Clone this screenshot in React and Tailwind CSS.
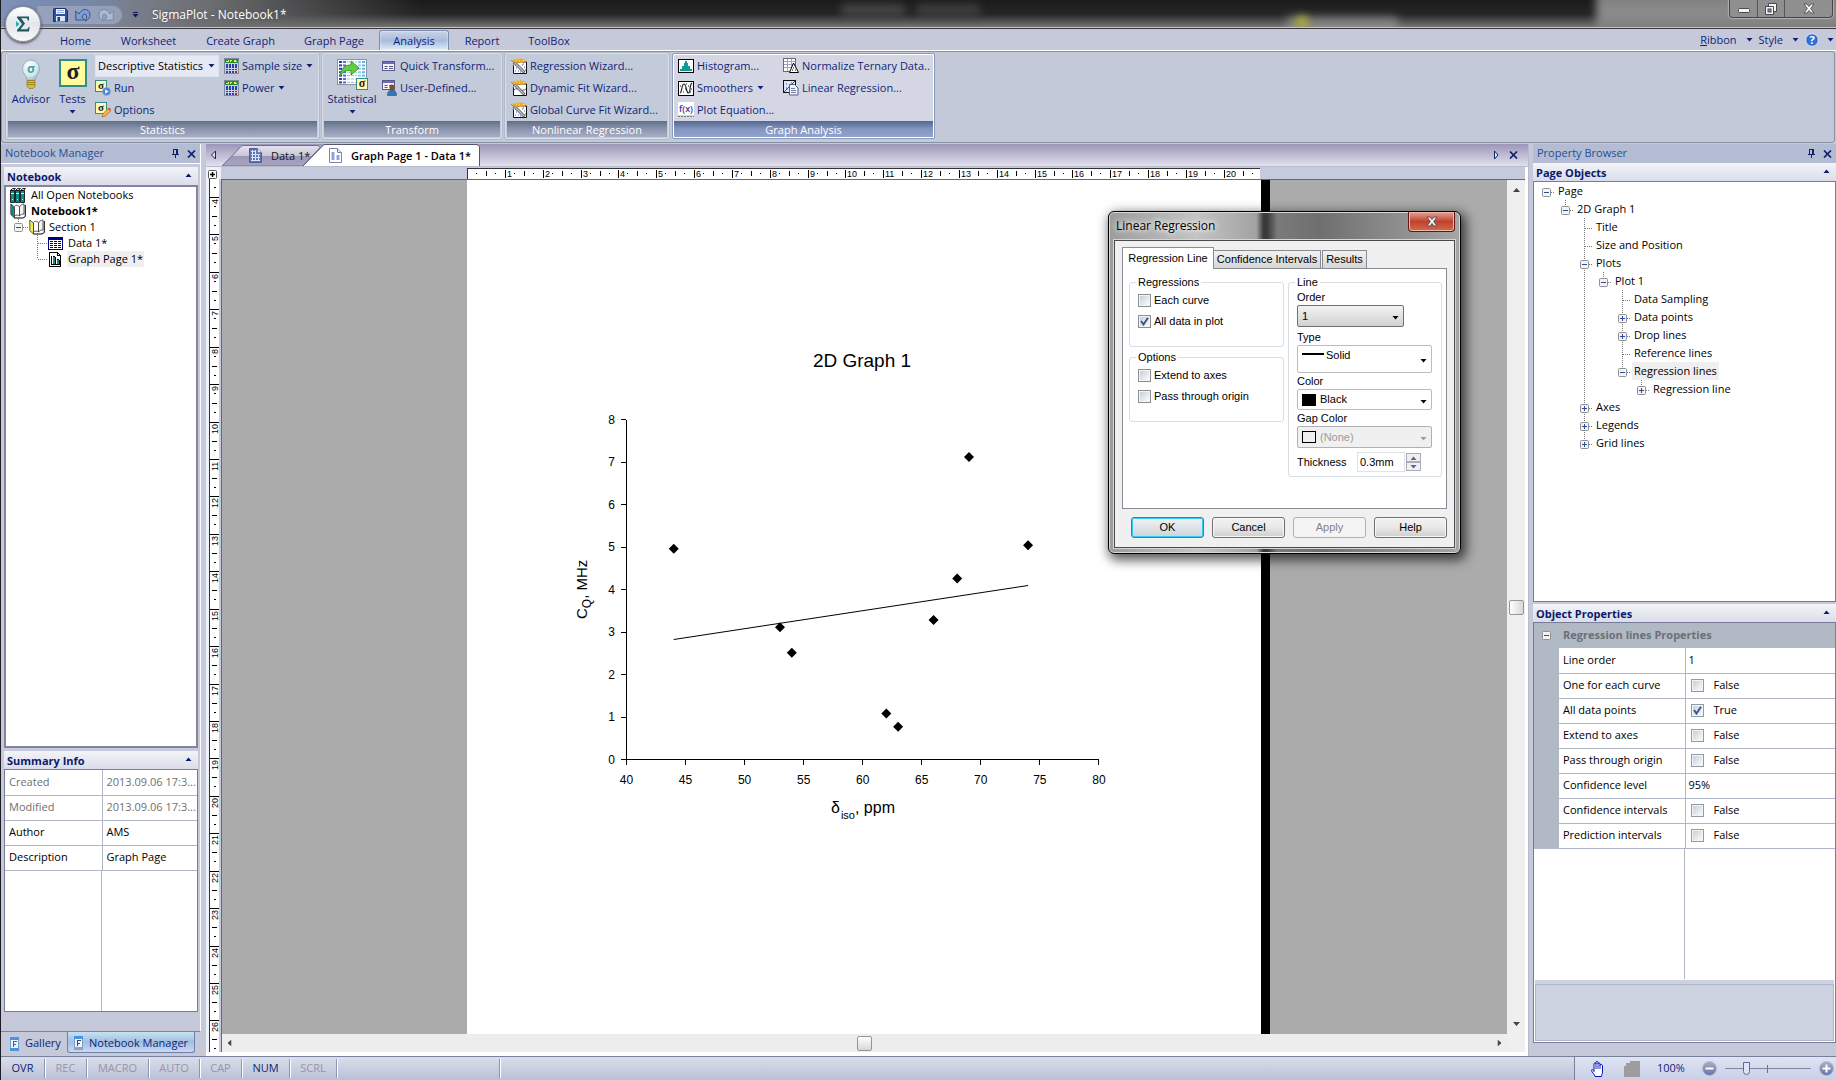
import clsx from 'clsx';

const UI = "font-['Open_Sans',sans-serif]";
const DIALOG = "font-['Liberation_Sans',sans-serif]";

const RIBBON_TABS = [
    { label: 'Home', width: 'w-[59px]' },
    { label: 'Worksheet', width: 'w-[87px]' },
    { label: 'Create Graph', width: 'w-[97px]' },
    { label: 'Graph Page', width: 'w-[90px]' },
    { label: 'Analysis', width: 'w-[70px]', active: true },
    { label: 'Report', width: 'w-[66px]' },
    { label: 'ToolBox', width: 'w-[68px]' },
];

const PAGE_TREE = [
    { label: 'Page', level: 0, box: '-', bars: [] },
    { label: '2D Graph 1', level: 1, box: '-', bars: [] },
    { label: 'Title', level: 2, more: true, bars: [] },
    { label: 'Size and Position', level: 2, more: true, bars: [] },
    { label: 'Plots', level: 2, box: '-', more: true, bars: [] },
    { label: 'Plot 1', level: 3, box: '-', bars: [2] },
    { label: 'Data Sampling', level: 4, more: true, bars: [2] },
    { label: 'Data points', level: 4, box: '+', more: true, bars: [2] },
    { label: 'Drop lines', level: 4, box: '+', more: true, bars: [2] },
    { label: 'Reference lines', level: 4, more: true, bars: [2] },
    { label: 'Regression lines', level: 4, box: '-', bars: [2], selected: true },
    { label: 'Regression line', level: 5, box: '+', bars: [2] },
    { label: 'Axes', level: 2, box: '+', more: true, bars: [] },
    { label: 'Legends', level: 2, box: '+', more: true, bars: [] },
    { label: 'Grid lines', level: 2, box: '+', bars: [] },
];

const PROPERTIES = [
    { label: 'Line order', value: '1' },
    { label: 'One for each curve', checked: false },
    { label: 'All data points', checked: true },
    { label: 'Extend to axes', checked: false },
    { label: 'Pass through origin', checked: false },
    { label: 'Confidence level', value: '95%' },
    { label: 'Confidence intervals', checked: false },
    { label: 'Prediction intervals', checked: false },
];

const SUMMARY = [
    { label: 'Created', value: '2013.09.06 17:3...', muted: true },
    { label: 'Modified', value: '2013.09.06 17:3...', muted: true },
    { label: 'Author', value: 'AMS' },
    { label: 'Description', value: 'Graph Page' },
];

const STATUS = [
    { label: 'OVR', on: true, width: 'w-[44px]' },
    { label: 'REC', width: 'w-[42px]' },
    { label: 'MACRO', width: 'w-[62px]' },
    { label: 'AUTO', width: 'w-[51px]' },
    { label: 'CAP', width: 'w-[42px]' },
    { label: 'NUM', on: true, width: 'w-[48px]' },
    { label: 'SCRL', width: 'w-[47px]' },
];

const POINTS = [
    [44, 4.96], [53, 3.11], [54, 2.51], [62, 1.08], [63, 0.77], [66, 3.28], [68, 4.26], [69, 7.12], [74, 5.04],
];

const px = (v) => 626.5 + (v - 40) * 11.81;
const py = (v) => 759.5 - v * 42.5;

/* ---------- icons ---------- */

function Caret({ className }) {
    return (
        <svg width="7" height="4" viewBox="0 0 7 4" className={clsx('shrink-0', className)} aria-hidden="true">
            <path d="M0.5 0h6L3.5 3.6z" fill="currentColor" />
        </svg>
    );
}

function PinIcon() {
    return (
        <svg width="9" height="9" viewBox="0 0 9 9" shapeRendering="crispEdges" aria-hidden="true">
            <path d="M2 0h5v5H2zM3 1v4h2V1z" fill="#10206f" fillRule="evenodd" />
            <path d="M1 5h7v1H1zM4 6h1v3H4z" fill="#10206f" />
        </svg>
    );
}

function CrossIcon() {
    return (
        <svg width="9" height="8" viewBox="0 0 9 8" aria-hidden="true">
            <path d="M1 .5l7 7M8 .5l-7 7" stroke="#10206f" strokeWidth="1.7" />
        </svg>
    );
}

function SaveIcon() {
    return (
        <svg width="15" height="14" viewBox="0 0 15 14" aria-hidden="true">
            <path d="M.5 1.5a1 1 0 011-1h11l2 2v11h-14z" fill="#2c4fa6" stroke="#1c2f78" />
            <rect x="3" y="1" width="9" height="5" fill="#f2f5fb" />
            <path d="M4 2.5h7M4 4.5h7" stroke="#9aa8c8" />
            <rect x="3" y="8" width="9" height="5.5" fill="#dfe6f3" />
            <rect x="4.500" y="9" width="2.500" height="4" fill="#223a86" />
        </svg>
    );
}

function UndoIcon({ redo }) {
    return (
        <svg width="16" height="14" viewBox="0 0 16 14" className={redo ? '-scale-x-100' : ''} aria-hidden="true">
            <path
                d="M.8 3v9h9L7 9c.6-3 3.600-4 4.400-1.500.6 2-.2 3.800-1 5.500 3.600-1.500 5.200-4.600 4.300-8C13.500.6 7.500-.3 4 6z"
                fill={redo ? '#a9bcd6' : '#7d9fd3'}
                stroke={redo ? '#7386a8' : '#274a92'}
                strokeWidth=".9"
            />
        </svg>
    );
}

function BulbIcon() {
    return (
        <svg width="20" height="31" viewBox="0 0 20 31" aria-hidden="true">
            <defs>
                <radialGradient id="bulb" cx=".4" cy=".3" r=".8">
                    <stop offset="0" stopColor="#fff" />
                    <stop offset=".6" stopColor="#d4e6ea" />
                    <stop offset="1" stopColor="#86a9b5" />
                </radialGradient>
            </defs>
            <path d="M10 1a8.500 8.500 0 00-8.500 8.500c0 5 3.800 6.500 4.500 12h8c.7-5.500 4.500-7 4.500-12A8.500 8.500 0 0010 1z" fill="url(#bulb)" stroke="#8aa6b0" strokeWidth=".8" />
            <text x="10" y="14" textAnchor="middle" fontSize="12" fontWeight="700" fill="#3f9fae" className={UI}>σ</text>
            <path d="M6 21.500h8v6l-2 2H8l-2-2z" fill="#d3bb3f" stroke="#8c7618" strokeWidth=".7" />
            <path d="M6 23.500h8M6 25.500h8" stroke="#8c7618" strokeWidth=".7" />
        </svg>
    );
}

function SigmaTile() {
    return (
        <svg width="28" height="28" viewBox="0 0 28 28" className="overflow-visible" aria-hidden="true">
            <rect x="1" y="1" width="26" height="26" fill="#fffc9e" stroke="#2f8f86" strokeWidth="2" />
            <text x="14" y="20" textAnchor="middle" fontSize="24" fontWeight="700" fill="#222" className="font-['Liberation_Serif',serif]">σ</text>
        </svg>
    );
}

function RunIcon() {
    return (
        <svg width="16" height="16" viewBox="0 0 16 16" className="overflow-visible" aria-hidden="true">
            <rect x=".5" y=".5" width="11" height="11" fill="#fffcb8" stroke="#2f8f86" />
            <text x="6" y="9" textAnchor="middle" fontSize="11" fontWeight="700" fill="#222" className="font-['Liberation_Serif',serif]">σ</text>
            <circle cx="11.500" cy="11.500" r="4" fill="#4b80d0" stroke="#8fb2e6" strokeWidth=".6" />
            <path d="M10.200 9.200l3.500 2.300-3.500 2.300z" fill="#fff" />
        </svg>
    );
}

function OptionsIcon() {
    return (
        <svg width="16" height="16" viewBox="0 0 16 16" className="overflow-visible" aria-hidden="true">
            <rect x=".5" y=".5" width="11" height="11" fill="#fffcb8" stroke="#2f8f86" />
            <text x="6" y="9" textAnchor="middle" fontSize="11" fontWeight="700" fill="#222" className="font-['Liberation_Serif',serif]">σ</text>
            <path d="M7 15l1-3.500 5-5 2.500 2.500-5 5z" fill="#f2b544" stroke="#a8691a" strokeWidth=".7" />
            <path d="M13 6.500l1-1 2 2-.8 1.200z" fill="#d8423a" />
        </svg>
    );
}

function CalcIcon() {
    const cells = [];
    for (let y = 0; y < 4; y++) for (let x = 0; x < 4; x++) cells.push([x, y]);
    return (
        <svg width="15" height="16" viewBox="0 0 15 16" shapeRendering="crispEdges" aria-hidden="true">
            <rect width="15" height="16" fill="#7f8a9c" />
            <rect x="1" y="1" width="13" height="4" fill="#1d8f3a" />
            <path d="M2 3h2V2h1v2h1V2h2v1h1v1h1V2h2v1h1v1H9V3H7v1H2z" fill="#f6ee3c" />
            <rect x="1" y="5" width="13" height="10" fill="#c9d0e2" />
            {cells.map(([x, y]) => (
                <rect key={`${x}-${y}`} x={2 + x * 3} y={6 + y * 2.4} width="2" height="1.600" fill={x === 3 && y === 3 ? '#c81e1e' : '#2a3fb5'} />
            ))}
        </svg>
    );
}

function StatisticalIcon() {
    const rows = [0, 1, 2, 3, 4, 5, 6];
    return (
        <svg width="31" height="31" viewBox="0 0 31 31" aria-hidden="true">
            <rect x=".5" y=".5" width="29" height="25" fill="#fff" stroke="#8b93a6" />
            {rows.map((r) => (
                <g key={r}>
                    <rect x="2" y={2 + r * 3.4} width="3" height="2" fill="#2f35c8" />
                    <rect x="6" y={2 + r * 3.4} width="3" height="2" fill="#5c6ad8" />
                    <path d={`M10 ${3 + r * 3.4}h10`} stroke="#a9b6dc" strokeDasharray="3 1" />
                    <rect x="21" y={2 + r * 3.4} width="3" height="2" fill="#8fd0f2" />
                    <rect x="25" y={2 + r * 3.4} width="3" height="2" fill="#62b5e6" />
                </g>
            ))}
            <path d="M3 17C4 9 8 6 14 6V2l8 7-8 7v-4.500C9 11 6 12.500 3 17z" fill="#5fce3f" stroke="#2f8f24" strokeWidth=".9" />
            <rect x="19.500" y="19.500" width="11" height="11" fill="#fffcb8" stroke="#2f8f86" />
            <text x="25" y="28" textAnchor="middle" fontSize="12" fontWeight="700" fill="#222" className="font-['Liberation_Serif',serif]">σ</text>
        </svg>
    );
}

function FormIcon({ user }) {
    return (
        <svg width="15" height="16" viewBox="0 0 15 16" aria-hidden="true">
            <rect x=".5" y={user ? 0.5 : 3.5} width="12" height="9" fill="#f4f4fa" stroke="#59598c" />
            <rect x="1" y={user ? 1 : 4} width="11" height="2" fill="#6a68c0" />
            <path d={user ? 'M2.500 5.500h3M7 5.500h4M2.500 7.500h3' : 'M2.500 8.500h3M7 8.500h4M2.500 10.500h3M7 10.500h4'} stroke="#55557a" />
            {user && (
                <>
                    <circle cx="10" cy="7" r="2.600" fill="#8a4b2a" />
                    <path d="M5.500 15.500c0-4 2-5.500 4.500-5.500s4.500 1.500 4.500 5.500z" fill="#3477b4" stroke="#1f4f80" strokeWidth=".6" />
                </>
            )}
        </svg>
    );
}

function WizardIcon({ curve }) {
    return (
        <svg width="16" height="16" viewBox="0 0 16 16" aria-hidden="true">
            <path d="M2.500 4v11.500h13V4z" fill="#fff" stroke="#111" />
            {curve === 'line' && <path d="M3 10c4-4 7 3 12-1" stroke="#3757d8" fill="none" />}
            {curve !== 'line' && <path d="M4 13h1M5 10h1M9 14h1M11 7h1M13 9h1M4 7h1M7 13h1M14 12h1M12 6h1" stroke="#3757d8" />}
            <path d="M4 5l9.500 9.500" stroke="#4c4c4c" strokeWidth="2.800" />
            <path d="M4 5l9 9" stroke="#c4c4c4" strokeWidth="1.400" />
            <path d="M2 1l2 1 2-2 1.500 1.800L10 0l1 1.500L14 1l-.5 2L15 4.500l-3-.3L10 5 8 4 6 5 4 4 1 4z" fill="#f4a915" />
            <path d="M5 2h1M8 3h1M12 2.500h1" stroke="#fff36b" />
            <path d="M0 2l3 3-1 3" stroke="#8a8a8a" fill="none" />
        </svg>
    );
}

function HistogramIcon() {
    return (
        <svg width="16" height="14" viewBox="0 0 16 14" shapeRendering="crispEdges" aria-hidden="true">
            <rect x=".5" y=".5" width="15" height="13" fill="#fff" stroke="#000" />
            <path d="M2 12v-2h2V7h2V4h1V2h2v2h1v3h2v3h2v2z" fill="#0e9a97" />
        </svg>
    );
}

function SmootherIcon() {
    return (
        <svg width="16" height="15" viewBox="0 0 16 15" aria-hidden="true">
            <rect x=".5" y=".5" width="15" height="14" fill="#fff" stroke="#000" />
            <path d="M2 12C4 12 3.500 3 6 3s2 9 4.500 9S11 4 14 2" stroke="#222" strokeWidth="1.200" fill="none" />
            <path d="M2 5h1M3 9h1M5 11h1M8 3h1M7 8h1M12 11h1M13 8h1M10 5h1" stroke="#222" />
        </svg>
    );
}

function EquationIcon() {
    return (
        <svg width="16" height="16" viewBox="0 0 16 16" aria-hidden="true">
            <rect width="16" height="13" fill="#fff" />
            <text x="8" y="10" textAnchor="middle" fontSize="9" fontWeight="600" fill="#3b35a0" className={UI}>f(x)</text>
            <path d="M0 14.500h16" stroke="#777" strokeDasharray="2 1" />
        </svg>
    );
}

function TernaryIcon() {
    return (
        <svg width="16" height="16" viewBox="0 0 16 16" aria-hidden="true">
            <rect x=".5" y=".5" width="12" height="13" fill="#fff" stroke="#666c80" />
            <path d="M1 3.500h11M1 6.500h11M1 9.500h11M4.500 1v12M8.500 1v12" stroke="#9aa1cc" />
            <path d="M6.500 14.500L10.500 5l5 9.500z" fill="#fff" stroke="#000" />
            <path d="M10 10h1M9 12h1M12 12h1" stroke="#000" />
        </svg>
    );
}

function LinearIcon() {
    return (
        <svg width="16" height="16" viewBox="0 0 16 16" aria-hidden="true">
            <rect x=".5" y=".5" width="12" height="12" fill="#dfe4f6" stroke="#111" />
            <path d="M1 12L12 1" stroke="#2d45c0" />
            <path d="M3 4h1M6 5h1M8 3h1M3 8h1" stroke="#2d45c0" />
            <path d="M6.500 4.500h5l3.500 3.500v7h-8.500z" fill="#f3f5fb" stroke="#555f80" />
            <path d="M8 8.500h4M8 10.500h5M8 12.500h5" stroke="#6f7fb0" />
        </svg>
    );
}

function HelpIcon() {
    return (
        <svg width="14" height="14" viewBox="0 0 14 14" aria-hidden="true">
            <circle cx="7" cy="7" r="6.300" fill="#2e6fd6" stroke="#dbe6f7" />
            <text x="7" y="11" textAnchor="middle" fontSize="11" fontWeight="700" fill="#fff" className={UI}>?</text>
        </svg>
    );
}

function SheetIcon({ chart }) {
    return (
        <svg width="13" height="15" viewBox="0 0 13 15" aria-hidden="true">
            <path d="M.5.5h8l4 4v10H.5z" fill={chart ? '#fff' : '#5f74b5'} stroke={chart ? '#7c84a5' : '#505f98'} />
            <path d="M8.500.5v4h4" fill="#e4e8f4" stroke="#7c84a5" />
            {chart ? (
                <path d="M4 12V4M9 12V7" stroke="#8fa3dc" strokeWidth="3" />
            ) : (
                <path d="M2 3.500h5M2 6.500h9M2 9.500h9M2 12.500h9M3.500 2v11M6.500 2v11M9.500 6v7" stroke="#dde4f6" />
            )}
        </svg>
    );
}

function BooksIcon() {
    return (
        <svg width="16" height="15" viewBox="0 0 16 15" aria-hidden="true">
            {[0, 5, 10].map((x) => (
                <g key={x}>
                    <path d={`M${x + 0.5} 2.500l2-2h3l-2 2z`} fill="#ccc" stroke="#000" strokeWidth=".8" />
                    <path d={`M${x + 0.5} 2.500h4v12h-4z`} fill="#128c84" stroke="#000" strokeWidth=".8" />
                    <path d={`M${x + 1} 5.500h3M${x + 2} 11.500h1`} stroke="#d7efec" />
                </g>
            ))}
        </svg>
    );
}

function OpenBookIcon({ color }) {
    return (
        <svg width="16" height="16" viewBox="0 0 16 16" aria-hidden="true">
            <path d="M.8 1L4.500 4v11L.8 11.500z" fill={color} stroke="#333" strokeWidth=".8" />
            <path d="M4.500 13V3.500C6 1.500 8.500 2 9.500 4v9c-1.500-1.500-3.500-1-5 0z" fill="#fff" stroke="#333" strokeWidth=".8" />
            <path d="M9.500 4c.8-2 3-3 4.500-3v10c-2 0-3.500.5-4.500 2z" fill="#f4f4f4" stroke="#333" strokeWidth=".8" />
            <path d="M4.500 15h8.500l2.300-1.500V2" stroke="#000" fill="none" />
        </svg>
    );
}

function TableIcon() {
    return (
        <svg width="15" height="13" viewBox="0 0 15 13" shapeRendering="crispEdges" aria-hidden="true">
            <rect x=".5" y=".5" width="14" height="12" fill="#fff" stroke="#00007d" />
            <rect x="1" y="1" width="13" height="2" fill="#00007d" />
            <path d="M2 4.500h11M2 6.500h11M2 8.500h11M2 10.500h11" stroke="#111" strokeDasharray="3 1" />
        </svg>
    );
}

function GraphPageIcon() {
    return (
        <svg width="14" height="15" viewBox="0 0 14 15" shapeRendering="crispEdges" aria-hidden="true">
            <path d="M1.500.5h8l3 3v11h-11z" fill="#fff" stroke="#000" />
            <path d="M9.500.5v3h3" fill="none" stroke="#000" />
            <path d="M3 4h1v8h8v1H3z" fill="#000" />
            <rect x="5" y="5" width="2" height="7" fill="#128c84" />
            <rect x="9" y="8" width="2" height="4" fill="#128c84" />
            <path d="M5 4.500h2M9 7.500h2M7.500 5v7M11.500 8v4" stroke="#000" />
        </svg>
    );
}

function DockIcon({ mark }) {
    return (
        <svg width="9" height="14" viewBox="0 0 9 14" shapeRendering="crispEdges" aria-hidden="true">
            <rect x=".5" y=".5" width="8" height="13" fill="#eef2fb" stroke="#6aa0dc" />
            <rect width="9" height="3" fill="#4f93dc" />
            <rect y="11" width="9" height="3" fill={mark ? '#9aa0ac' : '#4f93dc'} />
            <path d="M3 4.500h4M3 7.500h3M3.500 4v6" stroke={mark ? '#445' : '#3b5fd0'} />
        </svg>
    );
}

function HandIcon() {
    return (
        <svg width="13" height="16" viewBox="0 0 13 16" aria-hidden="true">
            <path
                d="M4 15.500c0-2-3.500-4.500-3.500-6s1.500-1 2.500 1V3c0-1.500 2-1.500 2 0V1.500c0-1.500 2-1.500 2 0V3c0-1.500 2-1.500 2 0v1.500c0-1.500 2-1.500 2.500 0V11c0 2-1 2.500-1 4.500z"
                fill="#fff"
                stroke="#0a12c4"
            />
            <path d="M5 3v5M7 3v5M9 4v4" stroke="#0a12c4" strokeWidth=".9" />
        </svg>
    );
}

function ZoomIcon({ plus }) {
    return (
        <svg width="15" height="15" viewBox="0 0 15 15" aria-hidden="true">
            <defs>
                <linearGradient id={plus ? 'zoom-in' : 'zoom-out'} x2="0" y2="1">
                    <stop offset="0" stopColor="#a9b0c2" />
                    <stop offset="1" stopColor="#6376ac" />
                </linearGradient>
            </defs>
            <circle cx="7.500" cy="7.500" r="7" fill={plus ? 'url(#zoom-in)' : 'url(#zoom-out)'} stroke="#b8bfd2" strokeWidth=".8" />
            <path d={plus ? 'M3.500 7.500h8M7.500 3.500v8' : 'M3.500 7.500h8'} stroke="#fff" strokeWidth="2" />
        </svg>
    );
}

function ExpandBox({ x, y, sign }) {
    return (
        <g>
            <rect x={x + 0.5} y={y + 0.5} width="8" height="8" rx="1" fill="#f3f3f3" stroke="#919191" />
            <path d={`M${x + 2} ${y + 4.5}h5`} stroke="#2b4b9c" />
            {sign === '+' && <path d={`M${x + 4.5} ${y + 2}v5`} stroke="#2b4b9c" />}
        </g>
    );
}

/* ---------- ribbon ---------- */

function RibbonItem({ icon, label, caret }) {
    return (
        <button type="button" className="flex h-[22px] items-center whitespace-nowrap text-left">
            <span className="grid w-[16px] shrink-0 place-items-center">{icon}</span>
            <span className="ml-[3px]">{label}</span>
            {caret && <Caret className="ml-[4px]" />}
        </button>
    );
}

function RibbonGroup({ title, className, hot, children }) {
    return (
        <section
            className={clsx(
                'flex h-[86px] shrink-0 flex-col rounded-[2px] border p-px',
                hot ? 'border-[#8d99b8] bg-[#d4d7e3] ring-1 ring-inset ring-white' : 'border-[#d9deea] bg-[#c3cad9] outline-1 outline-[#b1b8ca]',
                className,
            )}
        >
            <div className="flex min-h-0 flex-1">{children}</div>
            <h2
                className={clsx(
                    'h-4 shrink-0 bg-gradient-to-b text-center leading-[18px] text-white',
                    hot ? 'from-[#54678f] via-[#8495c0] to-[#92a3cd]' : 'from-[#626e86] via-[#8a94af] to-[#a6aec4]',
                )}
            >
                {title}
            </h2>
        </section>
    );
}

function CloseGlyph() {
    return (
        <svg width="12" height="11" viewBox="0 0 12 11" aria-hidden="true">
            <path d="M1 1h3l2 2.500L8 1h3L7.700 5.500 11 10H8L6 7.500 4 10H1l3.300-4.500z" fill="#f6f6f6" stroke="#4a4a58" strokeWidth=".9" />
        </svg>
    );
}

function TitleBar() {
    return (
        <header className="relative flex h-[29px] shrink-0 items-center overflow-hidden border-b border-[#38383c] bg-gradient-to-b from-[#1b1b1b] via-[#262626] to-[#7b7b7b] pt-[2px]">
            <span className="absolute inset-y-0 left-0 w-[420px] bg-gradient-to-r from-[#8e9cba] via-[#6c6d6f] to-transparent" />
            <span className="absolute -left-4 -top-2 h-8 w-32 bg-[#6c85b8]/60 blur-md" />
            <span className="absolute left-[840px] top-1 h-3 w-16 rounded bg-[#5b5b5b]/60 blur-xs" />
            <span className="absolute left-[915px] top-1 h-3 w-16 rounded bg-[#505050]/60 blur-xs" />
            <span className="absolute left-[1285px] top-4 h-5 w-28 rounded bg-[#a4a4a4]/50 blur-xs" />
            <span className="absolute left-[1295px] top-4 h-3 w-3 rounded-full bg-[#b9b52c] blur-xs" />
            <span className="absolute -right-2 -top-2 h-11 w-[248px] bg-gradient-to-b from-[#7b7b7b] via-[#8d8d8d] to-[#757575] blur-xs" />
            <span className="absolute inset-x-0 bottom-0 h-px bg-[#c3c5cb]" />
            <div className="relative ml-[36px] flex h-5 items-center gap-[7px] rounded-r-full border border-l-0 border-[#7d879d] bg-[#a9b1c4]/60 pl-[16px] pr-2">
                <button type="button" aria-label="Save"><SaveIcon /></button>
                <button type="button" aria-label="Undo"><UndoIcon /></button>
                <button type="button" aria-label="Redo"><UndoIcon redo /></button>
            </div>
            <button type="button" aria-label="Customize toolbar" className="relative ml-[9px] grid place-items-center gap-px text-[#0d1b5e]">
                <span className="h-px w-[5px] bg-[#0d1b5e]" />
                <Caret />
            </button>
            <h1 className="relative ml-[13px] text-[12px] text-white [text-shadow:0_0_3px_#555]">SigmaPlot - Notebook1*</h1>
            <div className="relative -mt-[2px] mb-auto ml-auto mr-[3px] flex h-[18px] overflow-hidden rounded-b-[4px] border border-t-0 border-[#454545] bg-[#8f8f8f] shadow-[0_0_1px_1px_#b3b3b3]">
                <button type="button" aria-label="Minimize" className="grid w-[28px] place-items-center border-r border-[#555]">
                    <svg width="12" height="10" viewBox="0 0 12 10" aria-hidden="true"><rect x=".5" y="4.500" width="11" height="4" rx="1" fill="#f4f4f4" stroke="#474756" /></svg>
                </button>
                <button type="button" aria-label="Restore" className="grid w-[27px] place-items-center border-r border-[#555]">
                    <svg width="12" height="12" viewBox="0 0 12 12" aria-hidden="true">
                        <path d="M3.500.5h8v8h-8z" fill="#f4f4f4" stroke="#474756" />
                        <path d="M.5 3.500h8v8h-8z" fill="#f4f4f4" stroke="#474756" />
                        <rect x="3" y="6" width="3" height="3" fill="#8f8f8f" stroke="#474756" />
                    </svg>
                </button>
                <button type="button" aria-label="Close" className="grid w-[47px] place-items-center">
                    <CloseGlyph />
                </button>
            </div>
        </header>
    );
}

function MenuBar() {
    return (
        <nav className="flex h-[21px] shrink-0 items-end bg-[#c5c9da] pl-[45px] text-[#101f76]">
            {RIBBON_TABS.map((tab) => (
                <button
                    key={tab.label}
                    type="button"
                    className={clsx(
                        'h-5 pt-[2px] text-center whitespace-nowrap',
                        tab.width,
                        tab.active && 'rounded-t-[3px] border border-b-0 border-[#7f8db2] bg-gradient-to-b from-[#cbd3e6] via-[#a9bcdd] to-[#d9edf8] shadow-[inset_0_0_2px_#fff]',
                    )}
                >
                    {tab.label}
                </button>
            ))}
            <div className="ml-auto flex h-5 items-center pr-[2px]">
                <button type="button" className="flex items-center gap-[9px]"><span><u>R</u>ibbon</span><Caret /></button>
                <button type="button" className="ml-[6px] flex items-center gap-[9px]"><span>Style</span><Caret /></button>
                <button type="button" aria-label="Help" className="ml-[6px] flex items-center gap-2"><HelpIcon /><Caret /></button>
            </div>
        </nav>
    );
}

function Ribbon() {
    return (
        <div className="h-[94px] shrink-0 border-t border-white bg-[#c3c9d9]">
            <div className="mr-px flex h-[92px] gap-[3px] rounded-[3px] border border-[#8592a3] pl-1 pr-[3px] pt-px text-[#101f76]">
                <RibbonGroup title="Statistics" className="w-[313px]">
                    <button type="button" className="flex w-[46px] flex-col items-center pt-[4px]">
                        <BulbIcon />
                        <span className="leading-[18px]">Advisor</span>
                    </button>
                    <button type="button" className="flex w-[37px] flex-col items-center pt-[4px]">
                        <span className="grid h-[31px] place-items-start"><SigmaTile /></span>
                        <span className="leading-[18px]">Tests</span>
                        <Caret className="mt-[2px]" />
                    </button>
                    <div className="ml-1 flex flex-col">
                        <div className="relative h-[22px] w-[124px] border border-[#dfe3ee] bg-[#e6e9f4]">
                            <select aria-label="Statistics test" defaultValue="Descriptive Statistics" className="h-full w-full appearance-none pl-[2px] text-black">
                                <option>Descriptive Statistics</option>
                            </select>
                            <Caret className="pointer-events-none absolute right-[3px] top-2" />
                        </div>
                        <RibbonItem icon={<RunIcon />} label="Run" />
                        <RibbonItem icon={<OptionsIcon />} label="Options" />
                    </div>
                    <div className="ml-1 flex flex-col">
                        <RibbonItem icon={<CalcIcon />} label="Sample size" caret />
                        <RibbonItem icon={<CalcIcon />} label="Power" caret />
                    </div>
                </RibbonGroup>
                <RibbonGroup title="Transform" className="w-[180px]">
                    <button type="button" className="flex w-[56px] flex-col items-center pt-[4px]">
                        <StatisticalIcon />
                        <span className="leading-[18px]">Statistical</span>
                        <Caret className="mt-[2px]" />
                    </button>
                    <div className="ml-px flex flex-col">
                        <RibbonItem icon={<FormIcon />} label="Quick Transform..." />
                        <RibbonItem icon={<FormIcon user />} label="User-Defined..." />
                    </div>
                </RibbonGroup>
                <RibbonGroup title="Nonlinear Regression" className="w-[164px]">
                    <div className="ml-1 flex flex-col">
                        <RibbonItem icon={<WizardIcon />} label="Regression Wizard..." />
                        <RibbonItem icon={<WizardIcon curve="line" />} label="Dynamic Fit Wizard..." />
                        <RibbonItem icon={<WizardIcon />} label="Global Curve Fit Wizard..." />
                    </div>
                </RibbonGroup>
                <RibbonGroup title="Graph Analysis" className="w-[263px]" hot>
                    <div className="ml-1 flex w-[105px] flex-col">
                        <RibbonItem icon={<HistogramIcon />} label="Histogram..." />
                        <RibbonItem icon={<SmootherIcon />} label="Smoothers" caret />
                        <RibbonItem icon={<EquationIcon />} label="Plot Equation..." />
                    </div>
                    <div className="flex flex-col">
                        <RibbonItem icon={<TernaryIcon />} label="Normalize Ternary Data.." />
                        <RibbonItem icon={<LinearIcon />} label="Linear Regression..." />
                    </div>
                </RibbonGroup>
            </div>
        </div>
    );
}

/* ---------- side panels ---------- */

function PanelHeader({ title }) {
    return (
        <div className="flex h-[19px] shrink-0 items-center bg-[#b3bcd3] px-1">
            <h2 className="flex-1 text-[#264f98]">{title}</h2>
            <button type="button" aria-label="Pin" className="mr-[7px]"><PinIcon /></button>
            <button type="button" aria-label="Close panel"><CrossIcon /></button>
        </div>
    );
}

function SectionHeader({ title }) {
    return (
        <div className="flex h-[18px] shrink-0 items-center justify-between bg-gradient-to-b from-[#f3f4f8] to-[#dadde9] pl-[3px] pr-[6px] pt-[3px] text-[#0b1a6c]">
            <h3 className="font-bold">{title}</h3>
            <Caret className="mb-[6px] rotate-180" />
        </div>
    );
}

function NotebookPanel() {
    return (
        <aside className="flex w-[205px] shrink-0 flex-col">
            <div className="mr-[5px] flex min-h-0 flex-1 flex-col border-b border-r border-b-[#7b8299] border-r-white">
                <PanelHeader title="Notebook Manager" />
                <div className="flex min-h-0 flex-1 flex-col border-t border-white bg-[#c5c9da] pb-[19px] pl-[3px] pr-[2px] pt-[3px]">
                    <SectionHeader title="Notebook" />
                    <ul className="min-h-0 flex-1 border-2 border-[#83849f] bg-white pl-1 text-black">
                        <li className="flex h-4 items-center gap-[5px]"><BooksIcon />All Open Notebooks</li>
                        <li className="flex h-4 items-center gap-[5px] font-bold"><OpenBookIcon color="#128c84" />Notebook1*</li>
                        <li className="flex h-4 items-center">
                            <svg width="19" height="16" viewBox="0 0 19 16" aria-hidden="true">
                                <path d="M8.500 0v4M13 8.500h6" stroke="#777" strokeDasharray="1 1" />
                                <ExpandBox x={4} y={4} sign="-" />
                            </svg>
                            <OpenBookIcon color="#f4ec4a" />
                            <span className="ml-[4px]">Section 1</span>
                        </li>
                        <li className="flex h-4 items-center">
                            <svg width="38" height="16" viewBox="0 0 38 16" aria-hidden="true">
                                <path d="M27.500 0v16M28 8.500h10" stroke="#777" strokeDasharray="1 1" />
                            </svg>
                            <TableIcon />
                            <span className="ml-[5px]">Data 1*</span>
                        </li>
                        <li className="flex h-4 items-center">
                            <svg width="38" height="16" viewBox="0 0 38 16" aria-hidden="true">
                                <path d="M27.500 0v8M28 8.500h10" stroke="#777" strokeDasharray="1 1" />
                            </svg>
                            <GraphPageIcon />
                            <span className="ml-[5px] bg-[#efefef] px-px leading-4">Graph Page 1*</span>
                        </li>
                    </ul>
                    <div className="h-[3px]" />
                    <SectionHeader title="Summary Info" />
                    <div className="flex h-[243px] shrink-0 flex-col border border-[#767c99] bg-white">
                        <table className="w-full table-fixed border-collapse">
                            <tbody>
                                {SUMMARY.map((row) => (
                                    <tr key={row.label} className={clsx('h-[25px] border-b border-[#afb7c6]', row.muted ? 'text-[#707070]' : 'text-black')}>
                                        <th scope="row" className="w-[97px] border-r border-[#afb7c6] pl-1 text-left font-normal">{row.label}</th>
                                        <td className="whitespace-nowrap pl-1">{row.value}</td>
                                    </tr>
                                ))}
                            </tbody>
                        </table>
                        <div className="w-[97px] flex-1 border-r border-[#afb7c6]" />
                    </div>
                </div>
            </div>
            <div className="flex h-6 shrink-0 items-start bg-[#c5c9da] text-[#101f76]">
                <button type="button" className="flex h-[22px] w-[66px] items-center gap-[6px] pl-[9px] pt-px"><DockIcon />Gallery</button>
                <button
                    type="button"
                    className="flex h-[21px] w-[128px] items-center gap-[6px] whitespace-nowrap rounded-b-[3px] border border-t-0 border-[#6f80ad] bg-gradient-to-b from-[#c5e3f2] via-[#a3bde2] to-[#c9daf0] pl-[6px] pt-[2px]"
                >
                    <DockIcon mark />Notebook Manager
                </button>
            </div>
        </aside>
    );
}

function TreeRow({ row }) {
    const x = row.level * 19;
    const w = x + 14;
    return (
        <li className="flex h-[18px] items-center">
            <svg width={w} height="18" viewBox={`0 0 ${w} 18`} className="shrink-0" aria-hidden="true">
                {row.bars.map((b) => (
                    <path key={b} d={`M${b * 19 + 4.5} 0v18`} stroke="#777" strokeDasharray="1 1" />
                ))}
                {row.level > 0 && <path d={`M${x + 4.5} 0v${row.more ? 18 : 9}`} stroke="#777" strokeDasharray="1 1" />}
                <path d={`M${x + 5} 10.500h8`} stroke="#777" strokeDasharray="1 1" />
                {row.box && <ExpandBox x={x} y={6} sign={row.box} />}
            </svg>
            <span className={clsx('px-[2px] leading-[18px]', row.selected && 'bg-[#efefef]')}>{row.label}</span>
        </li>
    );
}

function CheckBox({ id, checked, muted }) {
    return (
        <span className="relative grid size-[13px] shrink-0 place-items-center">
            <input
                id={id}
                type="checkbox"
                defaultChecked={checked}
                className={clsx(
                    'peer size-[13px] appearance-none border bg-gradient-to-br from-[#c4cad6] to-white shadow-[inset_0_0_0_1px_#f4f4f4]',
                    muted ? 'border-[#8e9bac]' : 'border-[#8a8f94]',
                )}
            />
            <svg width="9" height="9" viewBox="0 0 9 9" className="pointer-events-none absolute hidden peer-checked:block" aria-hidden="true">
                <path d="M1 4l2.500 3.500L8 .8" stroke="#3a5795" strokeWidth="2" fill="none" />
            </svg>
        </span>
    );
}

function PropertyPanel() {
    return (
        <aside className="flex w-[303px] shrink-0 flex-col pb-[13px]">
            <PanelHeader title="Property Browser" />
            <SectionHeader title="Page Objects" />
            <ul className="min-h-0 flex-1 border border-[#767c99] bg-white pl-2 text-black">
                {PAGE_TREE.map((row) => (
                    <TreeRow key={row.label} row={row} />
                ))}
            </ul>
            <div className="h-[2px]" />
            <SectionHeader title="Object Properties" />
            <div className="flex min-h-0 flex-1 flex-col border border-[#767c99] bg-white text-black">
                <div className="flex h-[25px] shrink-0 items-center bg-[#b0b9c4] pl-2">
                    <svg width="9" height="9" viewBox="0 0 9 9" aria-hidden="true"><ExpandBox x={0} y={0} sign="-" /></svg>
                    <h4 className="ml-3 font-bold text-[#6b7076]">Regression lines Properties</h4>
                </div>
                <div className="shrink-0 bg-[#b0b9c4] pl-[25px]">
                    <table className="w-full table-fixed border-collapse bg-white">
                        <tbody>
                            {PROPERTIES.map((row) => {
                                const id = `prop-${row.label.toLowerCase().replaceAll(' ', '-')}`;
                                return (
                                    <tr key={row.label} className="h-[25px] border-b border-[#afb7c6]">
                                        <th scope="row" className="w-[126px] whitespace-nowrap border-r border-[#afb7c6] pl-1 text-left font-normal">{row.label}</th>
                                        <td className="pl-[3px]">
                                            {row.value ?? (
                                                <label htmlFor={id} className="flex items-center gap-[10px] pl-[2px]">
                                                    <CheckBox id={id} checked={row.checked} muted />
                                                    {row.checked ? 'True' : 'False'}
                                                </label>
                                            )}
                                        </td>
                                    </tr>
                                );
                            })}
                        </tbody>
                    </table>
                </div>
                <div className="w-[151px] flex-1 border-r border-[#afb7c6]" />
                <div className="m-px h-[61px] shrink-0 bg-[#ccd2e0] pt-1">
                    <div className="h-full border border-[#afb7c6]" />
                </div>
            </div>
        </aside>
    );
}

/* ---------- graph page ---------- */

function DocTabs() {
    return (
        <div className="flex h-[23px] shrink-0 items-end border-b border-[#b7bcca] bg-gradient-to-b from-[#9b96b8] to-[#e3e1ee]">
            <button type="button" aria-label="Previous tab" className="mb-[6px] w-4">
                <svg width="16" height="10" viewBox="0 0 16 10" aria-hidden="true"><path d="M9.500 1v8L5.500 5z" fill="#e6e6f0" stroke="#10206f" /></svg>
            </button>
            <button type="button" className="relative flex h-[21px] w-[98px] items-center">
                <svg width="98" height="21" viewBox="0 0 98 21" className="absolute inset-0" aria-hidden="true">
                    <defs>
                        <linearGradient id="tab" x2="0" y2="1">
                            <stop offset="0" stopColor="#e5e3ef" />
                            <stop offset=".5" stopColor="#c9c6da" />
                            <stop offset=".5" stopColor="#9b96b8" />
                            <stop offset="1" stopColor="#a9a5c3" />
                        </linearGradient>
                    </defs>
                    <path d="M0 21L19 1.500q1-1 3-1h74l2 2L81 21z" fill="url(#tab)" stroke="#6f6f8c" />
                </svg>
                <span className="relative ml-[27px]"><SheetIcon /></span>
                <span className="relative ml-[9px] pt-[2px] font-medium text-[#151515]">Data 1*</span>
            </button>
            <button type="button" className="relative -ml-[17px] flex h-[22px] w-[177px] items-center">
                <svg width="177" height="22" viewBox="0 0 177 22" className="absolute inset-0" aria-hidden="true">
                    <path d="M0 22L19 2.500q1-2 3-2h152l2.500 2V22" fill="#fff" stroke="#55556f" />
                </svg>
                <span className="relative ml-[26px]"><SheetIcon chart /></span>
                <span className="relative ml-[9px] whitespace-nowrap pt-[2px] font-semibold text-black">Graph Page 1 - Data 1*</span>
            </button>
            <div className="mb-[6px] ml-auto mr-[10px] flex items-center gap-[10px]">
                <button type="button" aria-label="Next tab">
                    <svg width="6" height="10" viewBox="0 0 6 10" aria-hidden="true"><path d="M1.500 1v8L5 5z" fill="#e6e6f0" stroke="#10206f" /></svg>
                </button>
                <button type="button" aria-label="Close tab"><CrossIcon /></button>
            </div>
        </div>
    );
}

function HorizontalRuler() {
    const units = Array.from({ length: 21 }, (_, i) => i);
    return (
        <svg width="793" height="11" viewBox="0 0 793 11" shapeRendering="crispEdges" className="shrink-0 bg-white" aria-hidden="true">
            <path d="M0 .5h793M.5 0v11" stroke="#333" />
            {units.map((u) => {
                const x = Math.round(u * 37.84);
                return (
                    <g key={u}>
                        {u > 0 && <rect x={x} y="2" width="1" height="8" fill="#000" />}
                        {u > 0 && <text x={x + 2} y="9" fontSize="9" className={DIALOG}>{u}</text>}
                        {u < 10 && <rect x={x + 9} y="5" width="1" height="1" fill="#000" />}
                        <rect x={x + 19} y="3" width="1" height="5" fill="#000" />
                        <rect x={x + 28} y="5" width="1" height="1" fill="#000" />
                    </g>
                );
            })}
        </svg>
    );
}

function VerticalRuler() {
    const units = Array.from({ length: 23 }, (_, i) => i + 4);
    return (
        <svg width="10" height="875" viewBox="0 0 10 875" shapeRendering="crispEdges" aria-hidden="true">
            <rect x="4" y="8" width="2" height="1" fill="#000" />
            {units.map((u) => {
                const y = Math.round(18 + (u - 4) * 37.43);
                return (
                    <g key={u}>
                        <rect x="0" y={y} width="9" height="1" fill="#000" />
                        <text transform={`translate(8 ${y + (u > 9 ? 12 : 7)}) rotate(-90)`} fontSize="9" className={DIALOG}>{u}</text>
                        {u < 10 && <rect x="4" y={y + 9} width="2" height="1" fill="#000" />}
                        <rect x="2" y={y + 19} width="5" height="1" fill="#000" />
                        <rect x="4" y={y + 28} width="2" height="1" fill="#000" />
                    </g>
                );
            })}
        </svg>
    );
}

function GraphPage() {
    return (
        <svg width="794" height="854" viewBox="467 180 794 854" className={DIALOG} role="img" aria-label="2D Graph 1">
            <text x="862" y="367" textAnchor="middle" fontSize="19">2D Graph 1</text>
            <g stroke="#000" shapeRendering="crispEdges">
                <path d={`M626.500 ${py(8)}V759.500H${px(80)}`} fill="none" />
                {[0, 1, 2, 3, 4, 5, 6, 7, 8].map((v) => (
                    <path key={v} d={`M621 ${py(v)}h5`} />
                ))}
                {[40, 45, 50, 55, 60, 65, 70, 75, 80].map((v) => (
                    <path key={v} d={`M${px(v)} 760v5`} />
                ))}
            </g>
            <g fontSize="12">
                {[0, 1, 2, 3, 4, 5, 6, 7, 8].map((v) => (
                    <text key={v} x="615" y={py(v) + 4} textAnchor="end">{v}</text>
                ))}
                {[40, 45, 50, 55, 60, 65, 70, 75, 80].map((v) => (
                    <text key={v} x={px(v)} y="784" textAnchor="middle">{v}</text>
                ))}
            </g>
            <text x="831" y="813" fontSize="16">
                δ<tspan dx="1" dy="6" fontSize="11">iso</tspan><tspan dy="-6">, ppm</tspan>
            </text>
            <text transform="translate(587 619) rotate(-90)" fontSize="15">
                C<tspan dy="4" fontSize="12">Q</tspan><tspan dy="-4">, MHz</tspan>
            </text>
            <path d={`M${px(44)} 639.500L${px(74)} 585.500`} stroke="#000" />
            {POINTS.map(([x, y]) => (
                <path key={x} d={`M${px(x)} ${py(y) - 5}l5 5-5 5-5-5z`} />
            ))}
        </svg>
    );
}

function ScrollArrow({ className }) {
    return (
        <svg width="7" height="4" viewBox="0 0 7 4" className={className} aria-hidden="true">
            <path d="M3.500 0L7 4H0z" fill="#444" />
        </svg>
    );
}

function Workspace() {
    return (
        <main className="flex min-w-0 flex-1 flex-col border-r border-[#b4bccb] bg-white">
            <DocTabs />
            <div className="grid min-h-0 flex-1 grid-cols-[15px_minmax(0,1fr)_18px] grid-rows-[12px_minmax(0,1fr)_18px] pb-1 pr-[3px]">
                <div className="grid place-items-end bg-[#eef1f7] pr-1">
                    <svg width="9" height="9" viewBox="0 0 9 9" aria-label="Ruler origin"><rect x=".5" y=".5" width="8" height="8" rx="1" fill="#fff" stroke="#555" /><path d="M2 4.500h5M4.500 2v5" stroke="#000" strokeWidth="1.500" /></svg>
                </div>
                <div className="col-span-2 flex min-w-0 items-end overflow-hidden bg-[#c5cbdc] pl-[246px]">
                    <HorizontalRuler />
                </div>

                <div className="row-span-2 flex overflow-hidden bg-[#c5cbdc]">
                    <div className="w-[3px] bg-[#eef3fa]" />
                    <div className="w-[10px] overflow-hidden border-l border-[#333] bg-white"><VerticalRuler /></div>
                </div>
                <div className="flex min-w-0 overflow-hidden border-l border-t border-[#696969] bg-[#ababab]">
                    <div className="w-[245px] shrink-0" />
                    <div className="w-[794px] shrink-0 overflow-hidden bg-white"><GraphPage /></div>
                    <div className="w-[9px] shrink-0 bg-black" />
                </div>
                <div className="flex flex-col items-center justify-between border-t border-[#696969] bg-[#efefef] py-2">
                    <ScrollArrow />
                    <div className="mb-auto mt-[408px] size-[15px] rounded-[2px] border border-[#959595] bg-gradient-to-r from-white to-[#d6d6d6]" />
                    <ScrollArrow className="rotate-180" />
                </div>
                <div className="flex items-center border-l border-[#696969] bg-[#ededed] px-1">
                    <ScrollArrow className="-rotate-90" />
                    <div className="mx-auto size-[15px] rounded-[2px] border border-[#959595] bg-gradient-to-b from-white to-[#d6d6d6]" />
                    <ScrollArrow className="rotate-90" />
                </div>
                <div className="bg-[#efefef]" />
            </div>
        </main>
    );
}

/* ---------- dialog ---------- */

function GroupBox({ title, className, children }) {
    return (
        <fieldset className={clsx('rounded-[3px] border border-[#d5dfe5] px-2', className)}>
            <legend className="-ml-[2px] px-[2px] leading-[14px]">{title}</legend>
            {children}
        </fieldset>
    );
}

function DialogCheck({ id, label, checked }) {
    return (
        <label htmlFor={id} className="flex h-[21px] items-center gap-[3px] pt-[2px]">
            <CheckBox id={id} checked={checked} />
            {label}
        </label>
    );
}

function Combo({ id, label, value, className, selectClass, swatch, disabled }) {
    return (
        <div className="flex flex-col">
            <label htmlFor={id} className="leading-[16px]">{label}</label>
            <div className={clsx('relative', className)}>
                {swatch}
                <select id={id} disabled={disabled} defaultValue={value} className={clsx('h-full w-full appearance-none rounded-[2px] border', selectClass)}>
                    <option>{value}</option>
                </select>
                <Caret className={clsx('pointer-events-none absolute right-[5px] top-1/2', disabled ? 'text-[#9a9a9a]' : 'text-black')} />
            </div>
        </div>
    );
}

function DialogButton({ label, primary, disabled }) {
    return (
        <button
            type="button"
            disabled={disabled}
            className={clsx(
                'h-[21px] w-[73px] rounded-[3px] border text-center',
                primary && 'border-[#3c7fb1] bg-gradient-to-b from-[#eef3f5] to-[#cdd5d9] shadow-[inset_0_0_0_1px_#35c8f2]',
                disabled && 'border-[#adb2b5] bg-[#f4f4f4] text-[#838383]',
                !primary && !disabled && 'border-[#707070] bg-gradient-to-b from-[#f2f2f2] via-[#e8e8e8] to-[#cfcfcf] shadow-[inset_0_0_0_1px_#f8f8f8]',
            )}
        >
            {label}
        </button>
    );
}

function RegressionDialog() {
    return (
        <section
            role="dialog"
            aria-labelledby="dialog-title"
            className={clsx(
                'absolute right-[375px] top-[211px] flex h-[343px] w-[353px] flex-col rounded-[6px] border border-black px-[5px] pb-[5px] text-[11px] text-black',
                'bg-[linear-gradient(90deg,#9c9c9c_0%,#c4c4c4_25%,#a2a2a2_42%,#3a3a3a_44%,#3a3a3a_45%,#7a7a7a_48%,#6f6f6f_60%,#a6a6a6_100%)]',
                'shadow-[inset_0_0_0_1px_#d9d9d9,3px_4px_12px_2px_#000000aa]',
                DIALOG,
            )}
        >
            <div className="flex h-[28px] shrink-0 items-start">
                <h2 id="dialog-title" className={clsx('ml-[2px] mt-[5px] flex-1 text-[12px] [text-shadow:0_0_6px_#fff,0_0_6px_#fff]', UI)}>Linear Regression</h2>
                <button
                    type="button"
                    aria-label="Close dialog"
                    className="grid h-5 w-[47px] place-items-center rounded-b-[4px] border border-t-0 border-[#5b1a16] bg-gradient-to-b from-[#e2a096] via-[#c2402c] to-[#d4694f] shadow-[inset_0_0_0_1px_#f0b9a9]"
                >
                    <CloseGlyph />
                </button>
            </div>
            <div className="flex flex-1 flex-col border border-[#4b4b4b] bg-[#f0f0f0] px-[7px] pt-[6px] shadow-[0_0_0_1px_#d6d6d6]">
                <div className="flex items-end" role="tablist">
                    <button type="button" role="tab" aria-selected="true" className="relative -mb-px h-[22px] w-[92px] border border-b-0 border-[#898c95] bg-white">Regression Line</button>
                    <button type="button" role="tab" aria-selected="false" className="h-[18px] w-[107px] whitespace-nowrap border border-b-0 border-l-0 border-[#898c95] bg-gradient-to-b from-[#f2f2f2] to-[#d6d6d6]">Confidence Intervals</button>
                    <button type="button" role="tab" aria-selected="false" className="ml-px h-[18px] w-[45px] border border-b-0 border-[#898c95] bg-gradient-to-b from-[#f2f2f2] to-[#d6d6d6]">Results</button>
                </div>
                <div className="flex h-[241px] gap-[4px] border border-[#898c95] bg-white pl-[6px] pr-[3px] pt-[6px]">
                    <div className="flex w-[155px] flex-col gap-[3px]">
                        <GroupBox title="Regressions" className="h-[72px]">
                            <DialogCheck id="each-curve" label="Each curve" />
                            <DialogCheck id="all-data" label="All data in plot" checked />
                        </GroupBox>
                        <GroupBox title="Options" className="h-[72px]">
                            <DialogCheck id="extend-axes" label="Extend to axes" />
                            <DialogCheck id="pass-origin" label="Pass through origin" />
                        </GroupBox>
                    </div>
                    <GroupBox title="Line" className="h-[202px] w-[154px]">
                        <div className="flex flex-col">
                            <Combo id="order" label="Order" value="1" className="mb-[2px] h-[22px] w-[107px]" selectClass="border-[#707070] bg-gradient-to-b from-[#f2f2f2] to-[#d2d2d2] pl-1" />
                            <Combo
                                id="type"
                                label="Type"
                                value="Solid"
                                className="h-[28px] w-[135px]"
                                selectClass="border-[#b9bcc2] bg-white pb-[8px] pl-[28px]"
                                swatch={<span className="absolute left-[5px] top-[8px] h-[2px] w-[22px] bg-black" />}
                            />
                            <Combo
                                id="color"
                                label="Color"
                                value="Black"
                                className="h-[21px] w-[135px]"
                                selectClass="border-[#b9bcc2] bg-white pl-[22px]"
                                swatch={<span className="absolute left-[5px] top-[5px] h-3 w-[14px] bg-black" />}
                            />
                            <Combo
                                id="gap-color"
                                label="Gap Color"
                                value="(None)"
                                disabled
                                className="h-[22px] w-[135px]"
                                selectClass="border-[#adb2b5] bg-[#f0f0f0] pl-[22px] text-[#9c9c9c]"
                                swatch={<span className="absolute left-[5px] top-[5px] h-3 w-[14px] border border-black" />}
                            />
                            <div className="mt-1 flex h-5 items-center">
                                <label htmlFor="thickness" className="w-[60px]">Thickness</label>
                                <input id="thickness" defaultValue="0.3mm" className="h-5 w-[48px] border border-[#dfe3e8] bg-white pl-[2px]" />
                                <span className="ml-px flex flex-col">
                                    <button type="button" aria-label="Thicker" className="grid h-[9px] w-[15px] place-items-center border border-[#abadb3] bg-[#f0f0f0] text-[#4d64a8]"><Caret className="rotate-180" /></button>
                                    <button type="button" aria-label="Thinner" className="grid h-[9px] w-[15px] place-items-center border border-[#abadb3] bg-[#f0f0f0] text-[#4d64a8]"><Caret /></button>
                                </span>
                            </div>
                        </div>
                    </GroupBox>
                </div>
                <div className="mt-2 flex justify-end gap-2">
                    <DialogButton label="OK" primary />
                    <DialogButton label="Cancel" />
                    <DialogButton label="Apply" disabled />
                    <DialogButton label="Help" />
                </div>
            </div>
        </section>
    );
}

/* ---------- status bar ---------- */

function StatusBar() {
    return (
        <footer className="flex h-6 shrink-0 border-t border-[#78809b] bg-gradient-to-b from-[#d9deeb] via-[#cad0e0] to-[#b8c0d6]">
            {STATUS.map((item) => (
                <span
                    key={item.label}
                    className={clsx('my-[2px] border-r border-[#8d96b0] text-center leading-[18px] shadow-[1px_0_0_#fff]', item.width, item.on ? 'text-[#101f76]' : 'text-[#9a93a8]')}
                >
                    {item.label}
                </span>
            ))}
            <span className="my-[2px] w-[163px] border-r border-[#8d96b0] shadow-[1px_0_0_#fff]" />
            <div className="ml-auto flex w-[262px] items-center border-l border-[#78809b] bg-gradient-to-b from-[#dfe4f3] to-[#c9d0e6] pl-[16px] pr-[2px] text-[#101f76]">
                <button type="button" aria-label="Pan"><HandIcon /></button>
                <svg width="16" height="16" viewBox="0 0 16 16" className="ml-5" aria-hidden="true"><path d="M6 0h10v16H0V5h2V2h4z" fill="#9d9da0" /></svg>
                <span className="ml-[17px] w-[45px]">100%</span>
                <button type="button" aria-label="Zoom out"><ZoomIcon /></button>
                <span className="relative ml-2 flex h-4 w-[86px] items-center">
                    <span className="absolute left-[42px] top-1 h-2 w-px bg-[#66708f]" />
                    <input
                        type="range"
                        aria-label="Zoom"
                        min="0"
                        max="100"
                        defaultValue="23"
                        className="relative h-4 w-full appearance-none bg-transparent [&::-webkit-slider-runnable-track]:h-px [&::-webkit-slider-runnable-track]:bg-[#7d86a3] [&::-webkit-slider-thumb]:-mt-[6px] [&::-webkit-slider-thumb]:h-[13px] [&::-webkit-slider-thumb]:w-[7px] [&::-webkit-slider-thumb]:appearance-none [&::-webkit-slider-thumb]:rounded-b-[4px] [&::-webkit-slider-thumb]:border [&::-webkit-slider-thumb]:border-[#5d6c99] [&::-webkit-slider-thumb]:bg-[#dde4f4]"
                    />
                </span>
                <button type="button" aria-label="Zoom in" className="ml-auto"><ZoomIcon plus /></button>
            </div>
        </footer>
    );
}

export default function App() {
    return (
        <div className={clsx('relative flex h-screen w-full flex-col overflow-hidden border-l border-[#1c1c22] bg-[#c5c9da] text-[11px]', UI)}>
            <TitleBar />
            <button
                type="button"
                aria-label="Application menu"
                className="absolute left-1 top-[6px] grid size-[36px] place-items-center rounded-full border border-[#8a8f9c] bg-gradient-to-b from-white via-[#e3e6ec] to-[#f8f8fa] shadow-[0_1px_3px_#333]"
            >
                <svg width="14" height="16" viewBox="0 0 14 16" aria-hidden="true">
                    <path d="M1 .5h12v4h-1.200C11.500 2.800 11 2.300 9.500 2.300H5.200L9 7.500l-4.500 5.800H10c1.500 0 2-.7 2.600-2.300h1L13 15.500H1V14l5-6-5-6.200z" fill="#1f5b60" />
                    <path d="M0 5l3.500 3L0 11z" fill="#25b0a8" />
                </svg>
            </button>
            <MenuBar />
            <Ribbon />
            <div className="flex min-h-0 flex-1">
                <NotebookPanel />
                <Workspace />
                <div className="w-1 shrink-0" />
                <PropertyPanel />
            </div>
            <StatusBar />
            <RegressionDialog />
        </div>
    );
}
